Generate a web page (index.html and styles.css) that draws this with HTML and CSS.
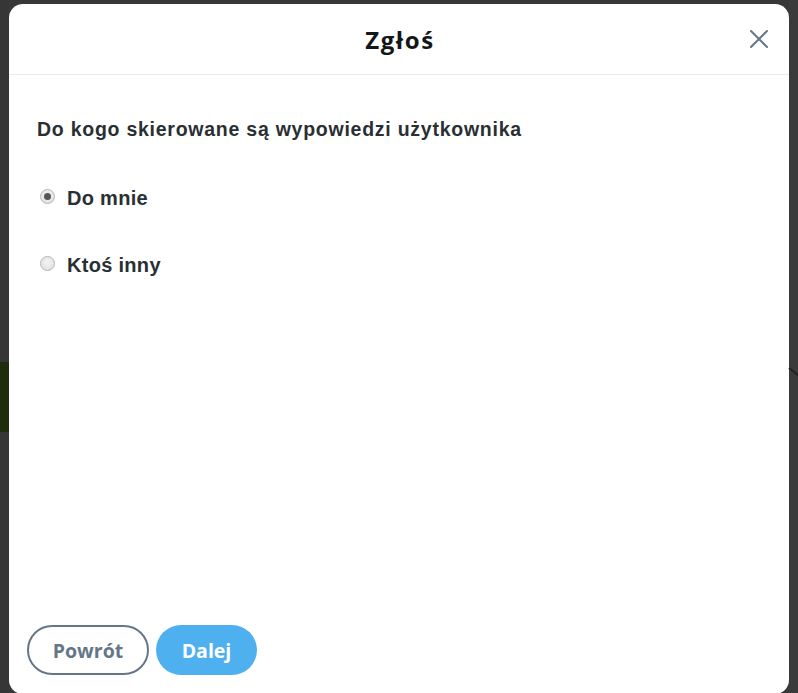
FILE: index.html
```html
<!DOCTYPE html>
<html lang="pl">
<head>
<meta charset="utf-8">
<title>Zgłoś</title>
<link rel="stylesheet" href="styles.css">
</head>
<body>
<div class="page">
  <div class="side-left"><div class="green"></div></div>
  <div class="modal">
    <div class="header">
      <h1 class="title">Zgłoś</h1>
      <button class="close" aria-label="Zamknij">
        <svg width="20" height="20" viewBox="0 0 20 20"><path d="M2 2 L18 18 M18 2 L2 18" stroke="#657786" stroke-width="2" fill="none" stroke-linecap="round"/></svg>
      </button>
    </div>
    <div class="content">
      <p class="question">Do kogo skierowane są wypowiedzi użytkownika</p>
      <label class="option"><span class="radio checked"></span><span class="label">Do mnie</span></label>
      <label class="option"><span class="radio"></span><span class="label">Ktoś inny</span></label>
    </div>
    <div class="footer">
      <button class="btn btn-outline">Powrót</button>
      <button class="btn btn-primary">Dalej</button>
    </div>
  </div>
  <div class="side-right"><div class="chev"></div></div>
</div>
</body>
</html>
```
FILE: styles.css
```css
html, body {
  margin: 0;
  padding: 0;
  height: 100%;
  overflow: hidden;
  background: #383838;
}
.page {
  display: flex;
  height: 693px;
  width: 798px;
}
.side-left {
  width: 9px;
  flex: none;
  background: #363636;
  padding-top: 362px;
  box-sizing: border-box;
}
.green {
  height: 70px;
  background: #1f2d0c;
}
.side-right {
  width: 9px;
  flex: none;
  background: #3b3b3b;
  position: relative;
}
.chev {
  position: absolute;
  left: 0;
  top: 367px;
  width: 12px;
  height: 2px;
  background: #222;
  transform: rotate(38deg);
  transform-origin: left center;
}
.modal {
  flex: 1;
  margin-top: 4px;
  height: 690px;
  background: #fff;
  border-radius: 14px;
  display: flex;
  flex-direction: column;
}
.header {
  height: 70px;
  flex: none;
  border-bottom: 1px solid #e6ecf0;
  display: flex;
  align-items: center;
  justify-content: center;
  position: relative;
}
.title {
  margin: 0;
  font-family: "Open Sans", "Noto Sans", sans-serif;
  font-weight: 700;
  font-size: 24px;
  color: #14171a;
  letter-spacing: 1.6px;
  padding-left: 2px;
}
.close {
  position: absolute;
  right: 20px;
  top: 25px;
  background: none;
  border: 0;
  padding: 0;
  width: 20px;
  height: 20px;
}
.close svg { display: block; }
.content {
  flex: 1;
  padding: 40px 28px 0 28px;
  font-family: "Liberation Sans", Arial, sans-serif;
  color: #292f33;
}
.question {
  margin: 0 0 38px 0;
  font-size: 19.5px;
  font-weight: 700;
  line-height: 28px;
  letter-spacing: 0.75px;
}
.option {
  display: flex;
  align-items: center;
  height: 30px;
  margin-bottom: 37px;
  padding-left: 3px;
}
.radio {
  width: 15px;
  height: 15px;
  box-sizing: border-box;
  border-radius: 50%;
  border: 1px solid #b5b5b5;
  background: radial-gradient(circle at 50% 40%, #f4f4f4, #dcdcdc);
  margin-right: 12px;
  display: flex;
  align-items: center;
  justify-content: center;
  flex: none;
}
.radio.checked::after {
  content: "";
  width: 7px;
  height: 7px;
  border-radius: 50%;
  background: #555;
}
.label {
  font-size: 20px;
  font-weight: 700;
  letter-spacing: 0.3px;
  padding-top: 4px;
}
.footer {
  flex: none;
  display: flex;
  gap: 7px;
  padding: 0 18px 19px 18px;
}
.btn {
  height: 50px;
  border-radius: 25px;
  font-family: "Open Sans", "Noto Sans", sans-serif;
  font-weight: 700;
  font-size: 19.5px;
  box-sizing: border-box;
  cursor: pointer;
}
.btn-outline {
  width: 122px;
  background: #fff;
  border: 2px solid #657786;
  color: #657786;
}
.btn-primary {
  width: 101px;
  background: #4fb0f0;
  border: 0;
  color: #fff;
}
```
